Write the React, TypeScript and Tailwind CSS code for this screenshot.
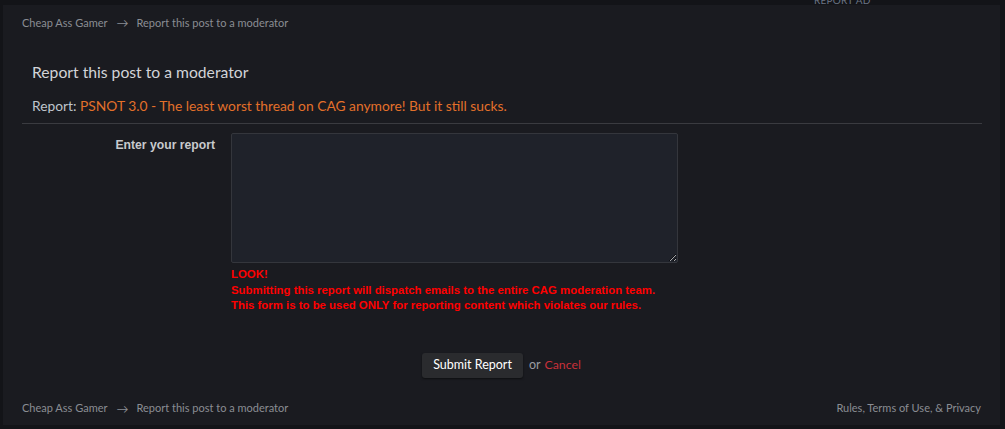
import React from "react";

function Breadcrumb() {
  return (
    <div className="flex items-center text-[11px] text-[#8a8d93]">
      <span>Cheap Ass Gamer</span>
      <span className="ml-[9px] mr-[8px] text-[12px]">→</span>
      <span>Report this post to a moderator</span>
    </div>
  );
}

export default function App() {
  return (
    <div
      className="w-[1005px] h-[429px] bg-[#131418] overflow-hidden relative"
      style={{ fontFamily: "Lato, 'Open Sans', sans-serif" }}
    >
      <div className="absolute left-[814px] top-[-7px] text-[10px] text-[#6b7585] tracking-wide">
        REPORT AD
      </div>
      <div className="ml-[3px] mr-[5px] mt-[5px] h-[420px] bg-[#1a1b20] flex flex-col">
        <div className="pl-[19px] pt-[9px] h-[34px]">
          <Breadcrumb />
        </div>
        <div className="mx-[19px]">
          <h1 className="pl-[10px] pt-[23px] text-[15.7px] leading-[20px] text-[#d2d4d8]">
            Report this post to a moderator
          </h1>
          <div className="pl-[10px] pt-[15px] pb-[8px] text-[13.8px] leading-[18px] text-[#bfc5cc]">
            Report:{" "}
            <span className="text-[#e3702a]">
              PSNOT 3.0 - The least worst thread on CAG anymore! But it still sucks.
            </span>
          </div>
          <div className="h-px bg-[#3a3b40] w-[960px]" />
          <div className="flex pt-[9px]">
            <div
              className="w-[193px] text-right pt-[3px] text-[12.2px] font-bold text-[#c8cacd]"
              style={{ fontFamily: "'Liberation Sans', Arial, sans-serif" }}
            >
              Enter your report
            </div>
            <div className="ml-[16px] flex flex-col">
              <textarea className="w-[447px] h-[130px] bg-[#1f222a] border border-[#34363c] rounded-[2px] outline-none" />
              <div
                className="pt-[4px] text-[11.4px] leading-[15.5px] font-bold text-[#ff0000]"
                style={{ fontFamily: "'Liberation Sans', Arial, sans-serif" }}
              >
                <div>LOOK!</div>
                <div>Submitting this report will dispatch emails to the entire CAG moderation team.</div>
                <div>This form is to be used ONLY for reporting content which violates our rules.</div>
              </div>
            </div>
          </div>
          <div className="flex items-center justify-center pt-[39px]">
            <button className="h-[25px] px-[11px] bg-[#2a2b2e] rounded-[3px] text-[12.5px] text-white shadow-[0_1px_2px_rgba(0,0,0,0.5)]">
              Submit Report
            </button>
            <span className="ml-[6px] text-[12.5px] text-[#9a9ca0]">or</span>
            <span className="ml-[4px] text-[12.3px] text-[#c9303a]">Cancel</span>
          </div>
        </div>
        <div className="flex justify-between items-center pl-[19px] pr-[19px] pt-[22px]">
          <Breadcrumb />
          <div className="text-[11px] text-[#8a8d93]">Rules, Terms of Use, &amp; Privacy</div>
        </div>
      </div>
    </div>
  );
}
